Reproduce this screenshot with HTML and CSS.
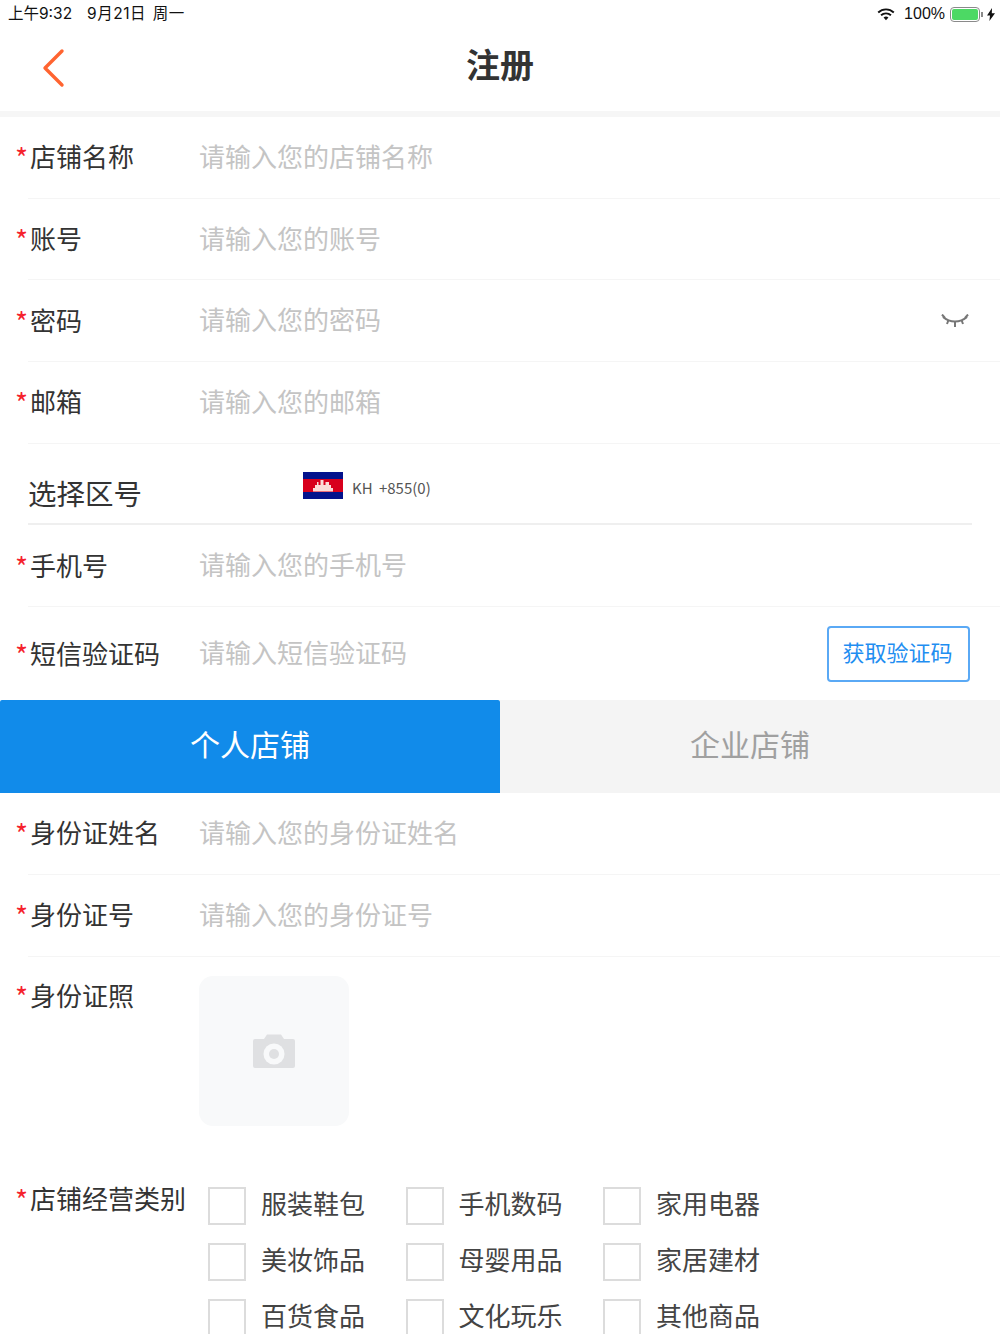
FILE: index.html
```html
<!DOCTYPE html>
<html lang="zh-CN">
<head>
    <meta charset="UTF-8">
    <meta name="viewport" content="width=device-width, initial-scale=1.0">
    <title>注册</title>
    <link rel="stylesheet" href="styles.css">
</head>
<body>
    <div id="page">
        <div class="status-bar">
            <div class="status-time">
                <span>上午9:32</span>
                <span class="status-date">9月21日 周一</span>
            </div>
            <div class="status-right">
                <svg class="wifi" width="18" height="13" viewBox="0 0 20 15">
                    <path d="M1 5.2a13 13 0 0 1 18 0" fill="none" stroke="#111" stroke-width="2.2"/>
                    <path d="M4.3 8.4a8.4 8.4 0 0 1 11.4 0" fill="none" stroke="#111" stroke-width="2.2"/>
                    <path d="M7.2 11a4.2 4.2 0 0 1 5.6 0L10 14z" fill="#111"/>
                </svg>
                <span>100%</span>
                <div class="battery"><div class="battery-fill"></div></div>
                <div class="battery-tip"></div>
                <svg width="8" height="13" viewBox="0 0 8 13"><path d="M5 0 0 7.4h3L2.4 13 8 5.2H4.8z" fill="#111"/></svg>
            </div>
        </div>

        <div class="nav-bar">
            <svg class="back" width="24" height="40" viewBox="0 0 24 40">
                <path d="M21 3 4 20l17 17" fill="none" stroke="#ff6430" stroke-width="3.4" stroke-linecap="round" stroke-linejoin="round"/>
            </svg>
            <h1>注册</h1>
        </div>

        <div class="row">
            <label class="label"><i>*</i>店铺名称</label>
            <span class="placeholder">请输入您的店铺名称</span>
        </div>
        <div class="row">
            <label class="label"><i>*</i>账号</label>
            <span class="placeholder">请输入您的账号</span>
        </div>
        <div class="row">
            <label class="label"><i>*</i>密码</label>
            <span class="placeholder">请输入您的密码</span>
            <svg class="eye" width="28" height="14" viewBox="0 0 28 14">
                <path d="M2 3c7 6 17 6 24 0" fill="none" stroke="#777" stroke-width="2"/>
                <path d="M1 0.500l3 3.500M7.500 6l-1.500 4M14 7.500V13M20.500 6l1.500 4M27 0.500l-3 3.500" fill="none" stroke="#777" stroke-width="2"/>
            </svg>
        </div>
        <div class="row">
            <label class="label"><i>*</i>邮箱</label>
            <span class="placeholder">请输入您的邮箱</span>
        </div>
        <div class="row row-area">
            <span class="area-label">选择区号</span>
            <svg class="flag" width="40" height="27" viewBox="0 0 40 27">
                <rect width="40" height="27" fill="#03128c"/>
                <rect y="7" width="40" height="13" fill="#d8001c"/>
                <path d="M10 19.500V16h2v-3h2V10h1.500v3h2V8h3v5h2V10H26v3h2v3h2v3.500z" fill="#fbdcd8"/>
            </svg>
            <span class="area-code">KH +855(0)</span>
        </div>
        <div class="row">
            <label class="label"><i>*</i>手机号</label>
            <span class="placeholder">请输入您的手机号</span>
        </div>
        <div class="row row-sms">
            <label class="label"><i>*</i>短信验证码</label>
            <span class="placeholder">请输入短信验证码</span>
            <button class="code-btn">获取验证码</button>
        </div>

        <div class="tabs">
            <div class="tab tab-active">个人店铺</div>
            <div class="tab">企业店铺</div>
        </div>

        <div class="row">
            <label class="label"><i>*</i>身份证姓名</label>
            <span class="placeholder">请输入您的身份证姓名</span>
        </div>
        <div class="row">
            <label class="label"><i>*</i>身份证号</label>
            <span class="placeholder">请输入您的身份证号</span>
        </div>
        <div class="row-photo">
            <label class="label"><i>*</i>身份证照</label>
            <div class="upload">
                <svg width="42" height="34" viewBox="0 0 42 34">
                    <path d="M2 5h9l3-4.500h14L31 5h9a2 2 0 0 1 2 2v25a2 2 0 0 1-2 2H2a2 2 0 0 1-2-2V7a2 2 0 0 1 2-2z" fill="#dfe0e2"/>
                    <circle cx="21" cy="20" r="10.500" fill="#f8f9fa"/>
                    <circle cx="21" cy="20" r="5" fill="#dfe0e2"/>
                </svg>
            </div>
        </div>

        <div class="row-category">
            <label class="label"><i>*</i>店铺经营类别</label>
            <div class="category-grid">
                <div class="check"><span class="box"></span><span class="check-text">服装鞋包</span></div>
                <div class="check"><span class="box"></span><span class="check-text">手机数码</span></div>
                <div class="check"><span class="box"></span><span class="check-text">家用电器</span></div>
                <div class="check"><span class="box"></span><span class="check-text">美妆饰品</span></div>
                <div class="check"><span class="box"></span><span class="check-text">母婴用品</span></div>
                <div class="check"><span class="box"></span><span class="check-text">家居建材</span></div>
                <div class="check"><span class="box"></span><span class="check-text">百货食品</span></div>
                <div class="check"><span class="box"></span><span class="check-text">文化玩乐</span></div>
                <div class="check"><span class="box"></span><span class="check-text">其他商品</span></div>
            </div>
        </div>
    </div>
</body>
</html>
```

FILE: styles.css
```css
html, body {
    margin: 0;
    padding: 0;
}

body {
    font-family: "Noto Sans CJK SC", "Noto Sans", sans-serif;
    background-color: #fff;
    color: #333;
}

#page {
    width: 1000px;
    height: 1334px;
    overflow: hidden;
}

.status-bar {
    height: 28px;
    padding: 0 5px 0 8px;
    display: flex;
    justify-content: space-between;
    align-items: center;
    color: #111;
    box-sizing: border-box;
}

.status-time {
    display: flex;
    gap: 15px;
    padding-bottom: 4px;
    font-family: "Inter", "Noto Sans CJK SC", sans-serif;
    font-size: 15.500px;
}

.status-date {
    letter-spacing: 0.5px;
    word-spacing: 2px;
}

.status-right {
    display: flex;
    align-items: center;
    font-family: "Liberation Sans", sans-serif;
    font-size: 16px;
}

.wifi {
    margin-right: 9px;
}

.battery {
    width: 30px;
    height: 15px;
    margin-left: 5px;
    padding: 1px;
    border: 1px solid #8a8a8a;
    border-radius: 4px;
    box-sizing: border-box;
}

.battery-fill {
    height: 100%;
    background-color: #4cd964;
    border-radius: 2px;
}

.battery-tip {
    width: 2px;
    height: 5px;
    margin: 0 4px 0 1px;
    background-color: #8a8a8a;
}

.nav-bar {
    height: 83px;
    padding-left: 41px;
    display: flex;
    align-items: center;
    border-bottom: 6px solid #f6f6f6;
    position: relative;
}

.nav-bar h1 {
    position: absolute;
    left: 0;
    right: 0;
    top: 11px;
    margin: 0;
    font-size: 34px;
    line-height: 50px;
    text-align: center;
    color: #333;
}

.back {
    margin-bottom: 3px;
}

.row {
    height: 81.700px;
    margin-left: 28px;
    padding-right: 28px;
    display: flex;
    align-items: center;
    border-bottom: 1px solid #f5f5f5;
    box-sizing: border-box;
}

.label {
    flex-shrink: 0;
    position: relative;
    font-size: 26px;
    line-height: 36px;
    padding: 0 0 2px 2px;
    box-sizing: content-box;
    width: 169px;
    color: #333;
}

.label i {
    position: absolute;
    left: -13px;
    top: 1px;
    font-style: normal;
    font-size: 28px;
    color: #f5222d;
}

.placeholder {
    padding-bottom: 4px;
    font-size: 26px;
    color: #c4c4c4;
}

.eye {
    margin-left: auto;
    margin-right: 3px;
}

.row-area {
    margin-right: 28px;
    padding-right: 0;
    border-bottom: 2px solid #efefef;
}

.area-label {
    width: 275px;
    font-size: 28.500px;
    padding-top: 18px;
    color: #333;
}

.flag {
    margin-top: 4px;
}

.area-code {
    margin: 8px 0 0 9px;
    font-size: 15px;
    word-spacing: 3px;
    color: #555;
}

.row-sms {
    height: 93px;
    border-bottom: none;
    padding-right: 30px;
}

.code-btn {
    margin-left: auto;
    width: 143px;
    height: 56px;
    padding: 0 2px 5px 0;
    font-family: inherit;
    font-size: 22px;
    color: #1f8ef1;
    background-color: #fff;
    border: 2px solid #5aa9f5;
    border-radius: 4px;
}

.tabs {
    height: 93px;
    display: flex;
}

.tab {
    width: 500px;
    padding-bottom: 8px;
    display: flex;
    justify-content: center;
    align-items: center;
    font-size: 30px;
    color: #a0a0a0;
    background-color: #f4f4f4;
    box-sizing: border-box;
}

.tab-active {
    color: #fff;
    background-color: #118bea;
    border-radius: 2px 2px 0 0;
}

.row-photo {
    height: 209px;
    margin-left: 28px;
    padding-top: 19px;
    display: flex;
    align-items: flex-start;
    box-sizing: border-box;
}

.row-photo .label {
    margin-top: 1px;
}

.upload {
    width: 150px;
    height: 150px;
    display: flex;
    justify-content: center;
    align-items: center;
    background-color: #f8f9fa;
    border-radius: 14px;
}

.row-category {
    margin-left: 28px;
    margin-top: 4px;
    display: flex;
    align-items: flex-start;
}

.row-category .label {
    width: 178px;
    margin-top: 10px;
    white-space: nowrap;
}

.category-grid {
    display: grid;
    grid-template-columns: repeat(3, 197.500px);
    grid-auto-rows: 56px;
    margin-top: 8px;
}

.check {
    display: flex;
    align-items: center;
    font-size: 26px;
    color: #444;
}

.box {
    width: 38px;
    height: 38px;
    margin-right: 15px;
    flex-shrink: 0;
    border: 2px solid #dcdcdc;
    box-sizing: border-box;
}

.check-text {
    padding-bottom: 6px;
}
```
